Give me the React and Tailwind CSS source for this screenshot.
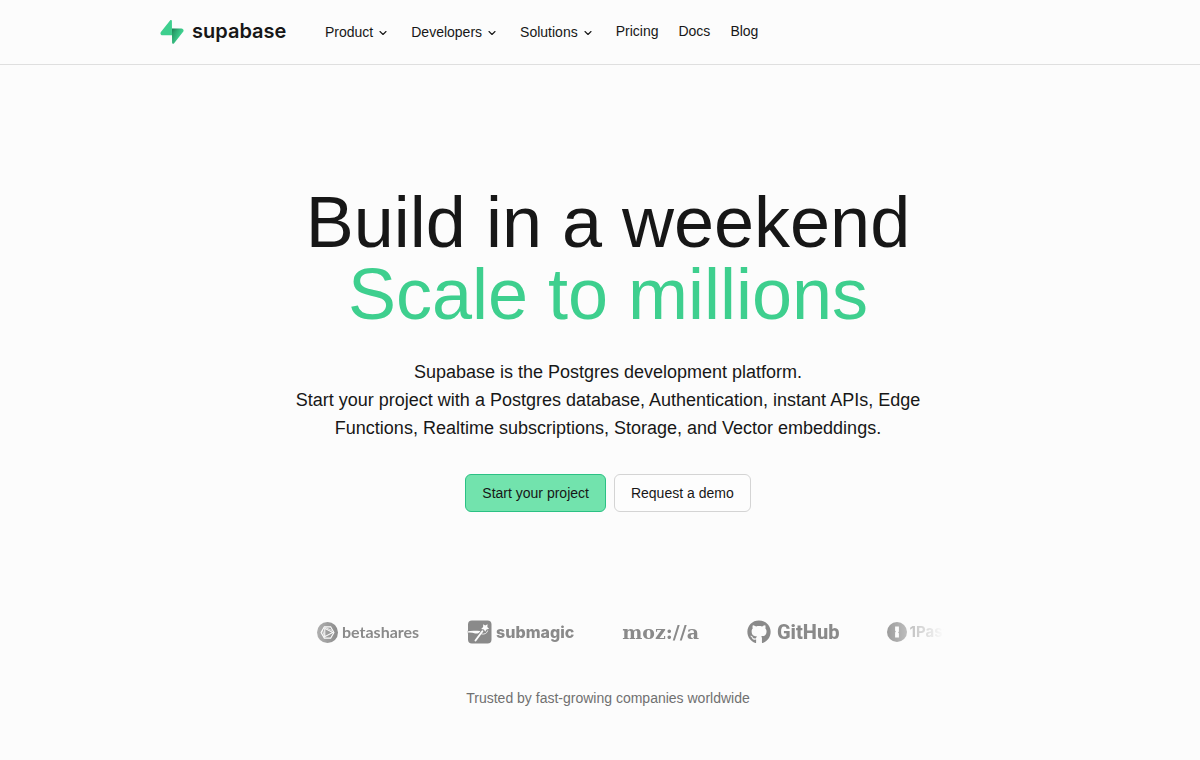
import React from "react";
import { ChevronDown } from "lucide-react";
import { FaGithub } from "react-icons/fa";

const MENUS = ["Product", "Developers", "Solutions"];
const LINKS = ["Pricing", "Docs", "Blog"];

function SupabaseMark() {
  return (
    <svg viewBox="0 0 109 113" className="h-6 w-6 shrink-0" aria-hidden="true">
      <defs>
        <linearGradient
          id="bolt"
          x1="53.97"
          y1="54.97"
          x2="94.16"
          y2="71.83"
          gradientUnits="userSpaceOnUse"
        >
          <stop stopColor="#249361" />
          <stop offset="1" stopColor="#3ECF8E" />
        </linearGradient>
        <linearGradient
          id="shade"
          x1="36.16"
          y1="30.58"
          x2="54.48"
          y2="65.08"
          gradientUnits="userSpaceOnUse"
        >
          <stop />
          <stop offset="1" stopOpacity="0" />
        </linearGradient>
      </defs>
      <path
        d="M63.7 110.3c-2.9 3.6-8.6 1.6-8.7-3L54 40.1h45.2c8.2 0 12.8 9.4 7.7 15.8L63.7 110.3Z"
        fill="url(#bolt)"
      />
      <path
        d="M63.7 110.3c-2.9 3.6-8.6 1.6-8.7-3L54 40.1h45.2c8.2 0 12.8 9.4 7.7 15.8L63.7 110.3Z"
        fill="url(#shade)"
        fillOpacity="0.2"
      />
      <path
        d="M45.3 2.1c2.9-3.6 8.7-1.6 8.7 3l.5 67.2H9.8c-8.2 0-12.7-9.5-7.6-15.9L45.3 2.1Z"
        fill="#3ECF8E"
      />
    </svg>
  );
}

function BetasharesMark() {
  return (
    <svg viewBox="0 0 20 20" className="h-[21px] w-[21px]" aria-hidden="true">
      <circle cx="10" cy="10" r="10" fill="currentColor" />
      <g fill="none" stroke="#fcfcfc">
        <path d="M7 4.6h6l3.1 5.4-3.1 5.4H7L3.9 10Z" strokeWidth="1.1" />
        <path d="M7.4 6v8l7.6-4Z" strokeWidth="1" />
        <path d="M5.2 7.5l2 7M8 5.2l6.5 3" strokeWidth="0.7" />
      </g>
    </svg>
  );
}

function SubmagicMark() {
  return (
    <svg viewBox="0 0 25 24" className="h-6 w-[25px]" aria-hidden="true">
      <path
        d="M5 .5h15.5a4 4 0 0 1 4 4v15a4 4 0 0 1-4 4H5a4 4 0 0 1-4-4v-6L0 12l1-1.500V4.500a4 4 0 0 1 4-4Z"
        fill="currentColor"
      />
      <path
        d="m16.200 4.200 2 1.300 2.400-1.300-.3 2.700 1.800 1.900-2.600.6-1.300 2.300-1.300-2.200-2.700-.5 1.900-2Z"
        fill="#fcfcfc"
      />
      <path
        d="M15.400 11.200 8.500 20.500"
        stroke="#fcfcfc"
        strokeWidth="1.900"
        strokeLinecap="round"
      />
      <path
        d="M0 11.400c4-1 8.500-.6 13.400-.5-.9 1.900-3 3.100-5.200 2.600C5.500 12.700 3 12.200 0 12.800Z"
        fill="#fcfcfc"
      />
      <path
        d="M14.500 14c3.200.5 5.600-.7 6.200-3.500"
        fill="none"
        stroke="#fcfcfc"
        strokeWidth="0.800"
      />
    </svg>
  );
}

function OnePasswordMark() {
  return (
    <svg viewBox="0 0 20 20" className="h-5 w-5" aria-hidden="true">
      <circle cx="10" cy="10" r="10" fill="currentColor" />
      <path
        d="M8.1 4.500h3.800v5l-.8.9.8.8v4.300H8.100v-5l.8-.9-.8-.8Z"
        fill="#fcfcfc"
      />
    </svg>
  );
}

function Header() {
  return (
    <header className="flex h-[65px] items-center border-b border-[#dfdfdf] px-5 lg:px-40">
      <a href="#" className="flex w-[125px] shrink-0 items-center gap-2">
        <SupabaseMark />
        <span className="pb-0.5 font-['Inter',sans-serif] text-xl leading-6 font-semibold">
          supabase
        </span>
      </a>
      <nav className="ml-10 hidden items-center gap-5 text-sm md:flex">
        {MENUS.map((name) => (
          <button
            key={name}
            type="button"
            className="flex cursor-pointer items-center gap-1 pr-0.5"
          >
            {name}
            <ChevronDown className="mt-0.5 h-3 w-3" strokeWidth={2.2} />
          </button>
        ))}
        {LINKS.map((name) => (
          <a key={name} href="#" className="pb-0.5">
            {name}
          </a>
        ))}
      </nav>
    </header>
  );
}

function Hero() {
  return (
    <section className="flex flex-col items-center pt-[121px] text-center">
      <h1 className="text-5xl leading-none sm:text-[72px]">
        <span className="block">Build in a weekend</span>
        <span className="block text-[#3ecf8e]">Scale to millions</span>
      </h1>
      <p className="mt-7 max-w-[672px] text-lg leading-7">
        Supabase is the Postgres development platform.
        <br />
        Start your project with a Postgres database, Authentication, instant
        APIs, Edge Functions, Realtime subscriptions, Storage, and Vector
        embeddings.
      </p>
      <div className="mt-8 flex gap-2 text-sm">
        <button
          type="button"
          className="h-[38px] cursor-pointer rounded-md border border-[#2bc184] bg-[#72e3ad] px-4"
        >
          Start your project
        </button>
        <button
          type="button"
          className="h-[38px] cursor-pointer rounded-md border border-[#d4d4d4] bg-[#fdfdfd] px-4"
        >
          Request a demo
        </button>
      </div>
    </section>
  );
}

function Customers() {
  return (
    <section className="flex flex-col items-center pt-[104px] pb-12">
      <div className="w-full max-w-[672px] overflow-hidden [mask-image:linear-gradient(to_right,transparent,black_10%,black_90%,transparent)]">
        <ul className="flex h-8 w-max items-center gap-12 pl-[45px] leading-6 text-[#8a8a8a]">
          <li className="flex items-center gap-1">
            <BetasharesMark />
            <span className="font-['Lato',sans-serif] text-base font-bold">
              betashares
            </span>
          </li>
          <li className="flex items-center gap-1">
            <SubmagicMark />
            <span className="font-['Inter',sans-serif] text-base font-extrabold">
              submagic
            </span>
          </li>
          <li className="font-['DejaVu_Serif',serif] text-[19px] leading-6 font-bold">
            moz://a
          </li>
          <li className="flex items-center gap-1.5">
            <FaGithub className="h-6 w-6" aria-hidden="true" />
            <span className="font-['Roboto',sans-serif] text-xl leading-6 font-extrabold">
              GitHub
            </span>
          </li>
          <li className="flex items-center gap-0.5">
            <OnePasswordMark />
            <span className="font-['Inter',sans-serif] text-[15px] font-bold">
              1Password
            </span>
          </li>
        </ul>
      </div>
      <p className="mt-10 text-sm text-[#707070]">
        Trusted by fast-growing companies worldwide
      </p>
    </section>
  );
}

export default function App() {
  return (
    <div className="min-h-screen bg-[#fcfcfc] font-['Liberation_Sans',Arial,sans-serif] text-[#171717]">
      <Header />
      <main className="pl-4">
        <Hero />
        <Customers />
      </main>
    </div>
  );
}
